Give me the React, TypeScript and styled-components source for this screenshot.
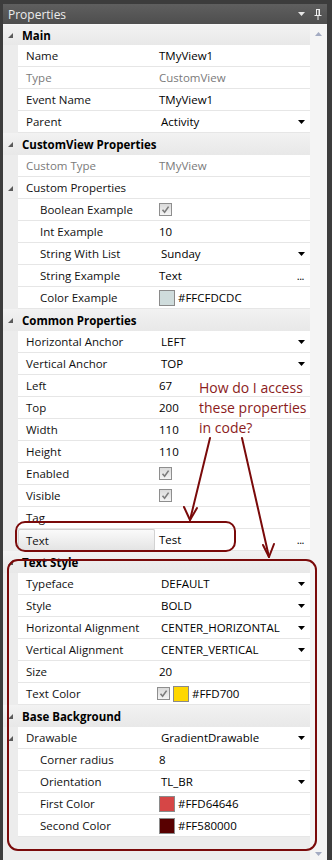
import React from "react";
import styled, { createGlobalStyle } from "styled-components";

const GlobalStyle = createGlobalStyle`
  html, body {
    margin: 0;
    padding: 0;
    background: #3c3c3c;
  }
  body {
    font-family: "Segoe UI", "Open Sans", sans-serif;
    font-size: 11.5px;
  }
`;

const Frame = styled.div`
  position: relative;
  width: 332px;
  height: 860px;
  box-sizing: border-box;
  padding: 4px 5px 0 3px;
  background: #3c3c3c;
  display: flex;
  flex-direction: column;
  overflow: hidden;
`;

const TitleBar = styled.div`
  height: 20px;
  display: flex;
  align-items: center;
  padding: 0 5px;
  background: linear-gradient(#5f5f5f, #4e4e4e);
  color: #ececec;
  font-size: 12px;
`;

const TitleTools = styled.div`
  margin-left: auto;
  display: flex;
  align-items: center;
  gap: 9px;
`;

const Body = styled.div`
  flex: 1;
  display: flex;
  border-top: 1px solid #f7f7f7;
  background: #ececec;
`;

const Grid = styled.div`
  flex: 1;
  display: flex;
  flex-direction: column;
`;

const ScrollBar = styled.div`
  width: 17px;
  background: #f4f4f4;
  display: flex;
  flex-direction: column;
  justify-content: space-between;
  align-items: center;
  padding: 7px 0 4px;
`;

const Category = styled.div<{ $first?: boolean }>`
  display: grid;
  grid-template-columns: 15px 1fr;
  align-items: center;
  height: ${(p) => (p.$first ? 20 : 22)}px;
  background: linear-gradient(#f2f2f2, #e8e8e8);
  font-weight: bold;
  color: #000;
`;

const CategoryLabel = styled.span`
  padding-left: 4px;
`;

const Row = styled.div`
  display: grid;
  grid-template-columns: 15px 137px 1fr;
  height: 22px;
`;

const Gutter = styled.div`
  display: flex;
  align-items: center;
  justify-content: center;
`;

const Cell = styled.div`
  display: flex;
  align-items: center;
  background: #fff;
  border-bottom: 1px solid #e6e6e6;
  white-space: nowrap;
  overflow: hidden;
`;

const Label = styled(Cell)<{ $indent?: boolean; $disabled?: boolean; $selected?: boolean }>`
  padding-left: ${(p) => (p.$indent ? 22 : 8)}px;
  color: ${(p) => (p.$disabled ? "#7a7a7a" : "#111")};
  ${(p) =>
    p.$selected &&
    `
    background: linear-gradient(#fafafa, #e4e4e4);
    border: 1px solid #d2d2d2;
    border-radius: 2px;
    padding-left: 7px;
  `}
`;

const Value = styled(Cell)<{ $combo?: boolean; $disabled?: boolean }>`
  padding: 0 5px 0 ${(p) => (p.$combo ? 6 : 4)}px;
  gap: 4px;
  color: ${(p) => (p.$disabled ? "#7a7a7a" : "#000")};
`;

const ValueText = styled.span`
  flex: 1;
`;

const Dots = styled.span`
  font-size: 11px;
  letter-spacing: -0.5px;
  margin-right: 1px;
`;

const CheckBox = styled.span`
  width: 11px;
  height: 11px;
  border: 1px solid #8e8e8e;
  background: linear-gradient(#dadada, #f5f5f5);
  display: inline-flex;
  align-items: center;
  justify-content: center;
  flex: none;
`;

const Swatch = styled.span<{ $color: string }>`
  width: 14px;
  height: 14px;
  border: 1px solid #8a8a8a;
  background: ${(p) => p.$color};
  flex: none;
  margin-right: -1px;
`;

const Callout = styled.div`
  position: absolute;
  left: 199px;
  top: 378px;
  font-family: "Segoe UI", "Open Sans", sans-serif;
  font-size: 14px;
  line-height: 20px;
  color: #8b1c1c;
`;

const Overlay = styled.svg`
  position: absolute;
  left: 0;
  top: 0;
  pointer-events: none;
`;

type Item =
  | { kind: "cat"; label: string; first?: boolean }
  | {
      kind: "prop";
      label: string;
      value?: string;
      control?: "combo" | "dots" | "check" | "color" | "checkcolor";
      color?: string;
      indent?: boolean;
      disabled?: boolean;
      expander?: boolean;
      selected?: boolean;
    };

const items: Item[] = [
  { kind: "cat", label: "Main", first: true },
  { kind: "prop", label: "Name", value: "TMyView1" },
  { kind: "prop", label: "Type", value: "CustomView", disabled: true },
  { kind: "prop", label: "Event Name", value: "TMyView1" },
  { kind: "prop", label: "Parent", value: "Activity", control: "combo" },
  { kind: "cat", label: "CustomView Properties" },
  { kind: "prop", label: "Custom Type", value: "TMyView", disabled: true },
  { kind: "prop", label: "Custom Properties", expander: true },
  { kind: "prop", label: "Boolean Example", control: "check", indent: true },
  { kind: "prop", label: "Int Example", value: "10", indent: true },
  { kind: "prop", label: "String With List", value: "Sunday", control: "combo", indent: true },
  { kind: "prop", label: "String Example", value: "Text", control: "dots", indent: true },
  { kind: "prop", label: "Color Example", value: "#FFCFDCDC", control: "color", color: "#cfdcdc", indent: true },
  { kind: "cat", label: "Common Properties" },
  { kind: "prop", label: "Horizontal Anchor", value: "LEFT", control: "combo" },
  { kind: "prop", label: "Vertical Anchor", value: "TOP", control: "combo" },
  { kind: "prop", label: "Left", value: "67" },
  { kind: "prop", label: "Top", value: "200" },
  { kind: "prop", label: "Width", value: "110" },
  { kind: "prop", label: "Height", value: "110" },
  { kind: "prop", label: "Enabled", control: "check" },
  { kind: "prop", label: "Visible", control: "check" },
  { kind: "prop", label: "Tag" },
  { kind: "prop", label: "Text", value: "Test", control: "dots", selected: true },
  { kind: "cat", label: "Text Style" },
  { kind: "prop", label: "Typeface", value: "DEFAULT", control: "combo" },
  { kind: "prop", label: "Style", value: "BOLD", control: "combo" },
  { kind: "prop", label: "Horizontal Alignment", value: "CENTER_HORIZONTAL", control: "combo" },
  { kind: "prop", label: "Vertical Alignment", value: "CENTER_VERTICAL", control: "combo" },
  { kind: "prop", label: "Size", value: "20" },
  { kind: "prop", label: "Text Color", value: "#FFD700", control: "checkcolor", color: "#ffd700" },
  { kind: "cat", label: "Base Background" },
  { kind: "prop", label: "Drawable", value: "GradientDrawable", control: "combo", expander: true },
  { kind: "prop", label: "Corner radius", value: "8", indent: true },
  { kind: "prop", label: "Orientation", value: "TL_BR", control: "combo", indent: true },
  { kind: "prop", label: "First Color", value: "#FFD64646", control: "color", color: "#d64646", indent: true },
  { kind: "prop", label: "Second Color", value: "#FF580000", control: "color", color: "#580000", indent: true },
];

const Expander = () => (
  <svg width="5" height="5" viewBox="0 0 5 5">
    <polygon points="5,0 5,5 0,5" fill="#5a5a5a" />
  </svg>
);

const DropArrow = ({ color = "#000" }: { color?: string }) => (
  <svg width="7" height="4" viewBox="0 0 7 4">
    <polygon points="0,0 7,0 3.5,4" fill={color} />
  </svg>
);

const Tick = () => (
  <svg width="9" height="9" viewBox="0 0 9 9">
    <path d="M1.5 4.8 L3.6 7.2 L7.6 1.6" fill="none" stroke="#7b7b7b" strokeWidth="1.6" />
  </svg>
);

const Pin = () => (
  <svg width="8" height="11" viewBox="0 0 8 11">
    <path d="M2 0.5 H6 M2.5 0.5 V6.5 M5.5 0.5 V6.5 M0.5 6.5 H7.5 M4 6.5 V11" stroke="#efefef" strokeWidth="1" fill="none" />
    <rect x="4.5" y="1" width="1" height="5.5" fill="#efefef" />
  </svg>
);

const ScrollArrow = ({ up }: { up?: boolean }) => (
  <svg width="7" height="4" viewBox="0 0 7 4">
    <polygon points={up ? "0,4 7,4 3.5,0" : "0,0 7,0 3.5,4"} fill="#a3abc2" />
  </svg>
);

const renderValue = (it: Extract<Item, { kind: "prop" }>) => {
  switch (it.control) {
    case "check":
      return (
        <CheckBox>
          <Tick />
        </CheckBox>
      );
    case "checkcolor":
      return (
        <>
          <CheckBox style={{ marginLeft: -2 }}>
            <Tick />
          </CheckBox>
          <Swatch $color={it.color!} style={{ marginLeft: -1 }} />
          <ValueText>{it.value}</ValueText>
        </>
      );
    case "color":
      return (
        <>
          <Swatch $color={it.color!} />
          <ValueText>{it.value}</ValueText>
        </>
      );
    case "combo":
      return (
        <>
          <ValueText>{it.value}</ValueText>
          <DropArrow />
        </>
      );
    case "dots":
      return (
        <>
          <ValueText>{it.value}</ValueText>
          <Dots>...</Dots>
        </>
      );
    default:
      return <ValueText>{it.value}</ValueText>;
  }
};

const Annotations = () => (
  <Overlay width="332" height="860" viewBox="0 0 332 860">
    <g fill="none" stroke="#7a0a0a" strokeWidth="2" strokeLinecap="round" strokeLinejoin="round">
      <rect x="16" y="522" width="219" height="29" rx="9" />
      <rect x="8" y="560" width="308" height="290" rx="10" />
      <path d="M210 438 L190 520" />
      <path d="M184 507 L190 520 L197 508" />
      <path d="M242 438 L269 557" />
      <path d="M263 545 L269 557 L274 544" />
    </g>
  </Overlay>
);

const App = () => (
  <>
    <GlobalStyle />
    <Frame>
      <TitleBar>
        Properties
        <TitleTools>
          <DropArrow color="#e6e6e6" />
          <Pin />
        </TitleTools>
      </TitleBar>
      <Body>
        <Grid>
          {items.map((it, i) =>
            it.kind === "cat" ? (
              <Category key={i} $first={it.first}>
                <Gutter>
                  <Expander />
                </Gutter>
                <CategoryLabel>{it.label}</CategoryLabel>
              </Category>
            ) : (
              <Row key={i}>
                <Gutter>{it.expander && <Expander />}</Gutter>
                <Label $indent={it.indent} $disabled={it.disabled} $selected={it.selected}>
                  {it.label}
                </Label>
                <Value $combo={it.control === "combo"} $disabled={it.disabled}>
                  {renderValue(it)}
                </Value>
              </Row>
            )
          )}
        </Grid>
        <ScrollBar>
          <ScrollArrow up />
          <ScrollArrow />
        </ScrollBar>
      </Body>
      <Callout>
        How do I access
        <br />
        these properties
        <br />
        in code?
      </Callout>
      <Annotations />
    </Frame>
  </>
);

export default App;
